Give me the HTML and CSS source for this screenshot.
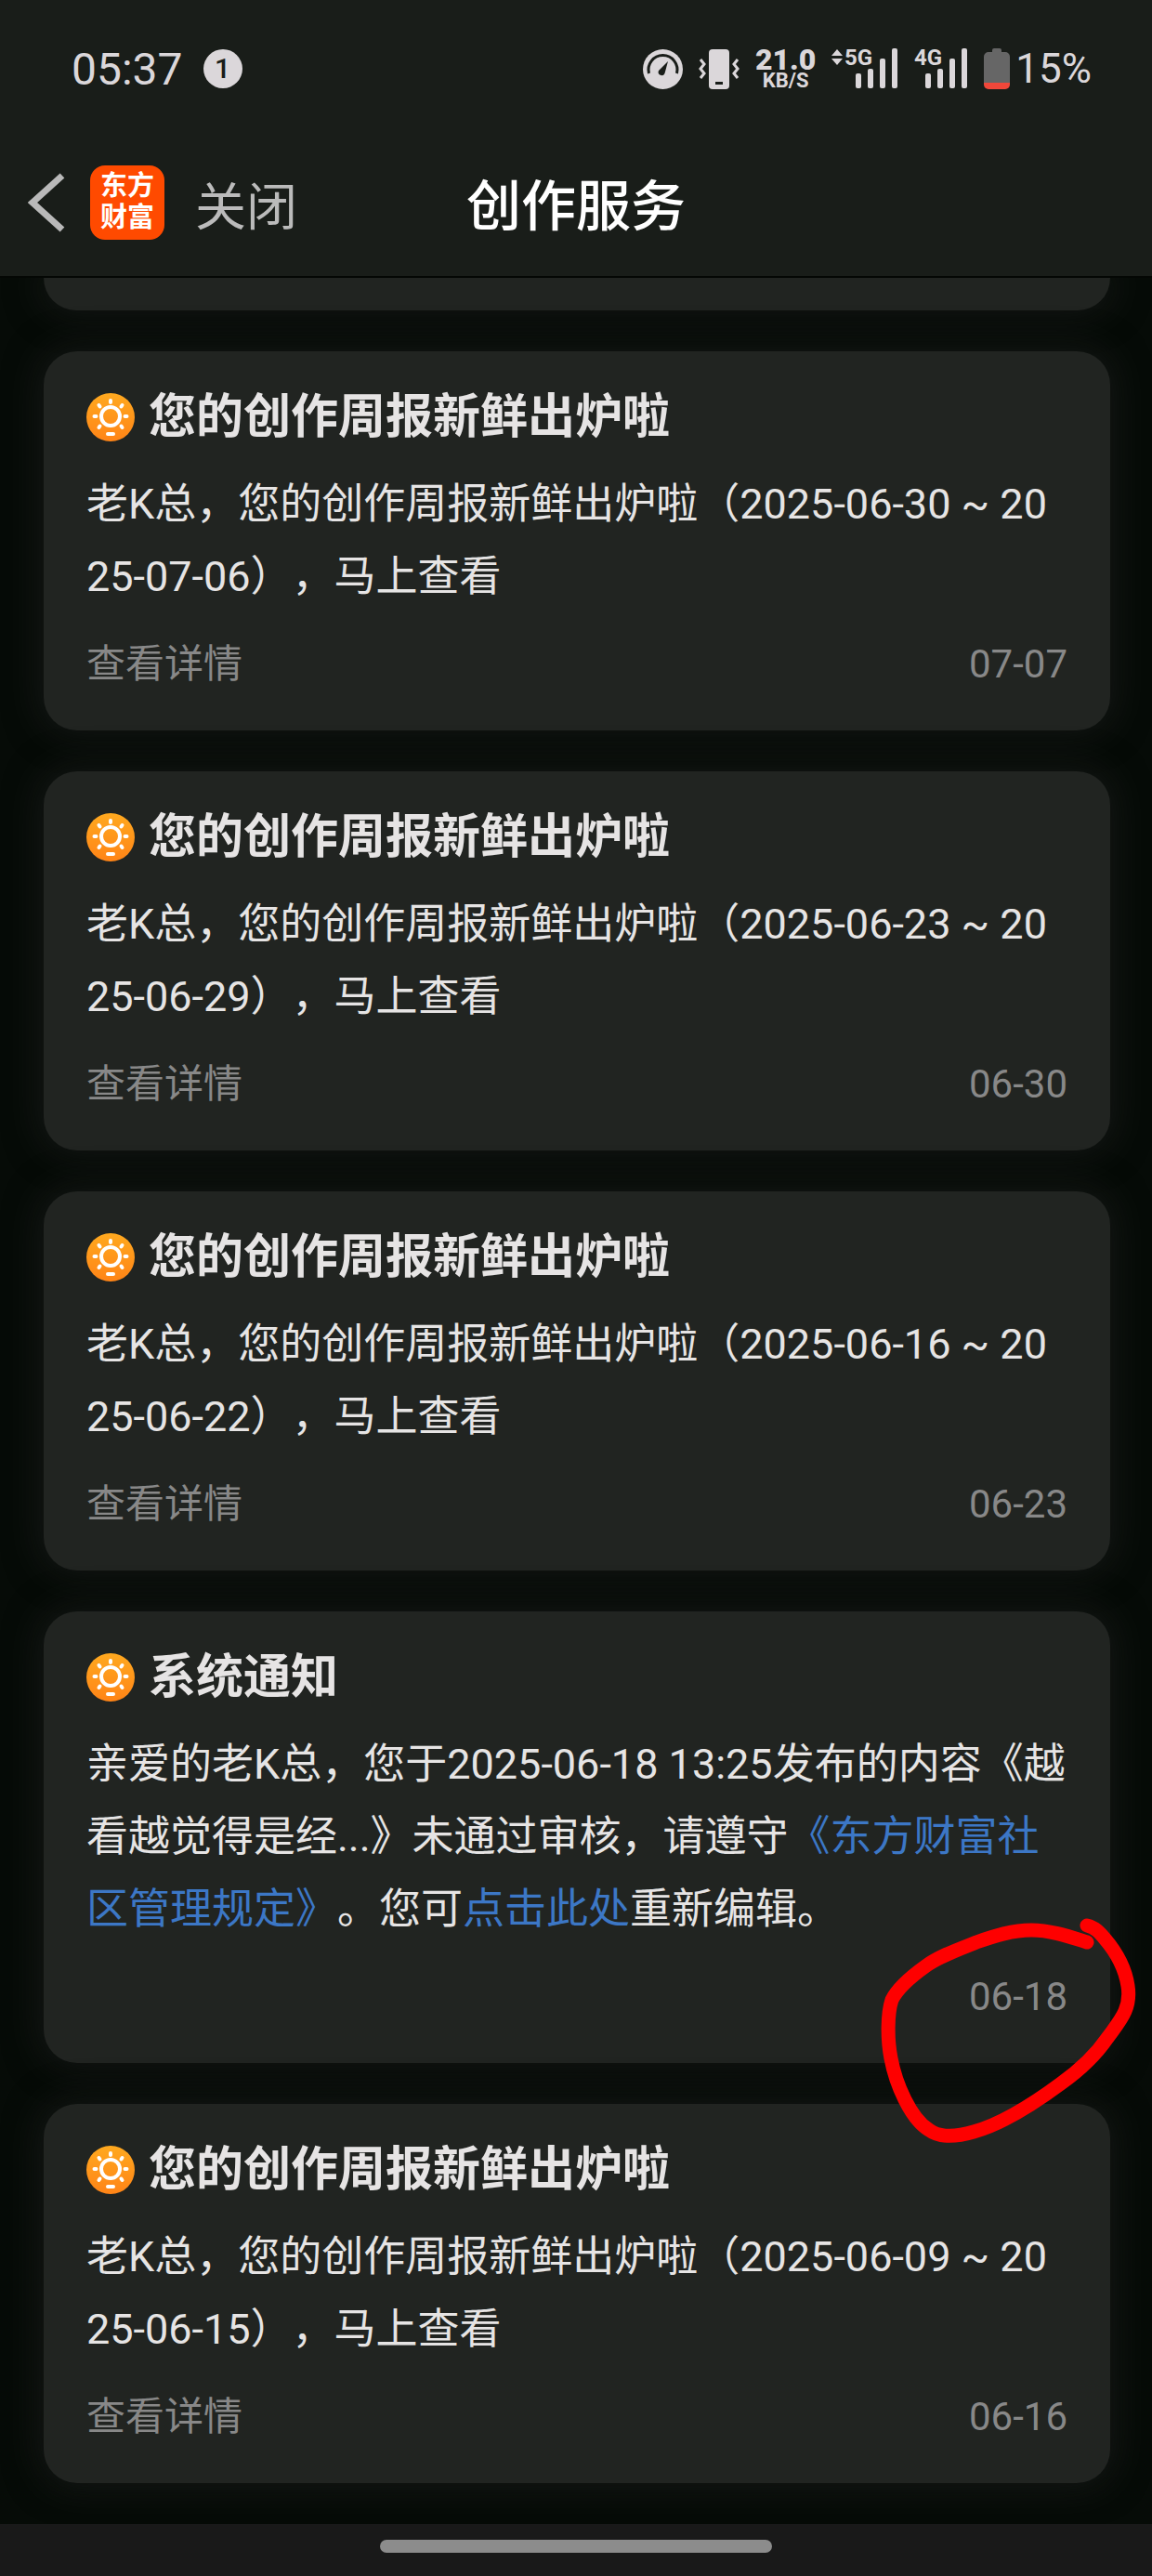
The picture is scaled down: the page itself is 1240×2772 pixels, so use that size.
FILE: index.html
```html
<!DOCTYPE html>
<html lang="zh-CN">
<head>
  <meta charset="UTF-8">
  <meta name="viewport" content="width=device-width, initial-scale=1.0">
  <title>创作服务</title>
  <link rel="stylesheet" href="styles.css">
</head>
<body>

  <!-- shared icons -->
  <svg width="0" height="0" class="sprite">
    <defs>
      <linearGradient id="sunFill" x1="0" y1="0" x2="0" y2="1">
        <stop offset="0" stop-color="#ffa91f"/>
        <stop offset="1" stop-color="#ff8417"/>
      </linearGradient>
      <symbol id="sun" viewBox="0 0 52 52">
        <circle cx="26" cy="26" r="26" fill="url(#sunFill)"/>
        <circle cx="26" cy="25" r="10" fill="none" stroke="#fff" stroke-width="4"/>
        <g stroke="#fff" stroke-width="4" stroke-linecap="round">
          <path d="M26 8v2M13.500 13l1 1.500M38.500 13l-1 1.500M8.500 25h2M41.500 25h2M14.500 35.500l-1 1.500M37.500 35.500l1 1.500"/>
          <path d="M23 44h6"/>
        </g>
      </symbol>
    </defs>
  </svg>

  <header class="header">
    <div class="status">
      <span class="time">05:37</span>
      <span class="badge">1</span>
      <div class="status-icons">
        <svg width="43" height="43" viewBox="0 0 43 43">
          <circle cx="21.500" cy="21.500" r="21.500" fill="#dbd7da"/>
          <path d="M6.500 26a15.500 15.500 0 1 1 30 0" fill="none" stroke="#191d19" stroke-width="3"/>
          <path d="M27 13l-3.500 13a3.500 3.500 0 0 1-6.500-3z" fill="#191d19"/>
        </svg>
        <svg width="44" height="43" viewBox="0 0 44 43">
          <rect x="11" y="0" width="22" height="43" rx="4" fill="#dbd7da"/>
          <rect x="18" y="35" width="8" height="3" fill="#191d19"/>
          <path d="M2 11l4 5-4 5 4 5-4 5M42 11l-4 5 4 5-4 5 4 5" fill="none" stroke="#dbd7da" stroke-width="3"/>
        </svg>
        <div class="speed"><b>21.0</b><span>KB/S</span></div>
        <svg width="72" height="60" viewBox="0 -8 72 60" fill="#dbd7da">
          <path d="M0 8l6-7 6 7zM0 11h12l-6 7z"/>
          <text x="14" y="18" class="net">5G</text>
          <rect x="26" y="27" width="6" height="16" rx="2"/>
          <rect x="39" y="22" width="6" height="21" rx="2"/>
          <rect x="52" y="11" width="6" height="32" rx="2"/>
          <rect x="65" y="0" width="6" height="43" rx="2"/>
        </svg>
        <svg width="58" height="60" viewBox="0 -8 58 60" fill="#dbd7da">
          <text x="0" y="18" class="net">4G</text>
          <rect x="12" y="27" width="6" height="16" rx="2"/>
          <rect x="25" y="22" width="6" height="21" rx="2"/>
          <rect x="38" y="11" width="6" height="32" rx="2"/>
          <rect x="51" y="0" width="6" height="43" rx="2"/>
        </svg>
        <div class="battery">
          <svg width="28" height="44" viewBox="0 0 28 44">
            <path d="M9 4V2a2 2 0 0 1 2-2h6a2 2 0 0 1 2 2v2h4a5 5 0 0 1 5 5v28H0V9a5 5 0 0 1 5-5z" fill="#666"/>
            <path d="M0 37h28v2a5 5 0 0 1-5 5H5a5 5 0 0 1-5-5z" fill="#f0473a"/>
          </svg>
          <span>15%</span>
        </div>
      </div>
    </div>

    <nav class="nav">
      <button class="back" aria-label="返回">
        <svg width="40" height="64" viewBox="0 0 40 64">
          <path d="M37 3L5 32l32 29" fill="none" stroke="#b9b9b9" stroke-width="7"/>
        </svg>
      </button>
      <span class="logo">东方<br>财富</span>
      <button class="close">关闭</button>
      <h1>创作服务</h1>
    </nav>
  </header>

  <main class="list">
    <div class="card card-cut"></div>

    <article class="card">
      <h2><svg class="icon"><use href="#sun"/></svg>您的创作周报新鲜出炉啦</h2>
      <p>老K总，您的创作周报新鲜出炉啦（2025-06-30 ~ 2025-07-06），马上查看</p>
      <div class="foot"><a href="#">查看详情</a><time>07-07</time></div>
    </article>

    <article class="card">
      <h2><svg class="icon"><use href="#sun"/></svg>您的创作周报新鲜出炉啦</h2>
      <p>老K总，您的创作周报新鲜出炉啦（2025-06-23 ~ 2025-06-29），马上查看</p>
      <div class="foot"><a href="#">查看详情</a><time>06-30</time></div>
    </article>

    <article class="card">
      <h2><svg class="icon"><use href="#sun"/></svg>您的创作周报新鲜出炉啦</h2>
      <p>老K总，您的创作周报新鲜出炉啦（2025-06-16 ~ 2025-06-22），马上查看</p>
      <div class="foot"><a href="#">查看详情</a><time>06-23</time></div>
    </article>

    <article class="card">
      <h2><svg class="icon"><use href="#sun"/></svg>系统通知</h2>
      <p>亲爱的老K总，您于2025-06-18 13:25发布的内容《越看越觉得是经...》未通过审核，请遵守<a href="#">《东方财富社区管理规定》</a>。您可<a href="#">点击此处</a>重新编辑。</p>
      <div class="foot"><time>06-18</time></div>
      <!-- hand-drawn circle round the date -->
      <svg class="mark" width="280" height="250" viewBox="0 0 280 250">
        <path d="M225 30C206 24 186 17 165 17C145 17 126 23 106 30C86 38 66 45 51 56C37 66 22 78 15 92C10 107 10 135 14 155C19 182 35 220 55 232C67 241 86 239 103 234C132 226 166 205 197 182C218 167 234 152 247 133C260 115 273 102 269 77C266 57 256 40 244 26C239 20 234 14 225 12"/>
      </svg>
    </article>

    <article class="card">
      <h2><svg class="icon"><use href="#sun"/></svg>您的创作周报新鲜出炉啦</h2>
      <p>老K总，您的创作周报新鲜出炉啦（2025-06-09 ~ 2025-06-15），马上查看</p>
      <div class="foot"><a href="#">查看详情</a><time>06-16</time></div>
    </article>
  </main>

  <footer class="homebar"><span></span></footer>

</body>
</html>
```
FILE: styles.css
```css
* {
  box-sizing: border-box;
  margin: 0;
  padding: 0;
}
body {
  display: flex;
  flex-direction: column;
  min-height: 100vh;
  font-family: Roboto, "Noto Sans CJK SC", sans-serif;
  background: #060b07;
  color: #e6e4e4;
  text-spacing-trim: space-all;
}
button {
  background: none;
  border: none;
  font-family: inherit;
  cursor: pointer;
}
a {
  color: #3c77c6;
  text-decoration: none;
}
svg {
  display: block;
}
.sprite {
  position: absolute;
}

/* header */
.header {
  position: relative;
  z-index: 1;
  background: #191d19;
  border-bottom: 2px solid #040704;
}
.status {
  display: flex;
  align-items: center;
  height: 148px;
  padding: 0 65px 0 77px;
  color: #dbd7da;
}
.time {
  font-size: 48px;
}
.badge {
  width: 42px;
  height: 42px;
  margin-left: 22px;
  border-radius: 50%;
  background: #dbd7da;
  color: #191d19;
  font-size: 30px;
  font-weight: 500;
  line-height: 42px;
  text-align: center;
}
.status-icons {
  display: flex;
  align-items: center;
  gap: 17px;
  margin-left: auto;
}
.speed {
  display: flex;
  flex-direction: column;
  align-items: center;
  font-weight: bold;
}
.speed b {
  font-size: 32px;
  line-height: 26px;
}
.speed span {
  font-size: 22px;
  line-height: 20px;
}
.net {
  font-size: 24px;
  font-weight: bold;
}
.battery {
  display: flex;
  align-items: center;
  gap: 6px;
  font-size: 44px;
}

.nav {
  position: relative;
  display: flex;
  align-items: center;
  height: 149px;
  padding: 0 30px 10px;
}
.logo {
  width: 80px;
  height: 80px;
  margin-left: 27px;
  padding-top: 5px;
  border-radius: 16px;
  background: #ff4a00;
  color: #fff;
  font-size: 29px;
  font-weight: bold;
  line-height: 34px;
  text-align: center;
}
.close {
  margin-left: 33px;
  color: #bbb;
  font-size: 55px;
}
.nav h1 {
  position: absolute;
  left: 50%;
  transform: translateX(-50%);
  color: #fff;
  font-size: 59px;
  font-weight: 500;
}

/* notice cards */
.list {
  flex: 1;
  display: flex;
  flex-direction: column;
  gap: 44px;
  padding: 0 45px 44px 47px;
}
.card {
  position: relative;
  padding: 36px 46px 41px;
  border-radius: 36px;
  background: #212421;
  box-shadow: 0 0 36px 6px rgba(34, 34, 34, 0.5);
}
.card-cut {
  height: 35px;
  padding: 0;
  border-radius: 0 0 36px 36px;
}
.card h2 {
  display: flex;
  align-items: center;
  gap: 15px;
  font-size: 51px;
  line-height: 70px;
}
.icon {
  width: 52px;
  height: 52px;
}
.card p {
  margin-top: 20px;
  font-size: 45px;
  line-height: 78px;
  word-break: break-all;
}
.foot {
  display: flex;
  margin-top: 25px;
  font-size: 42px;
  line-height: 60px;
  color: #888;
}
.foot a {
  color: inherit;
}
.foot time {
  margin-left: auto;
}
.mark {
  position: absolute;
  right: -30px;
  bottom: -90px;
  z-index: 1;
  fill: none;
  stroke: #fe0000;
  stroke-width: 15;
  stroke-linecap: round;
  pointer-events: none;
}

/* gesture bar */
.homebar {
  position: relative;
  display: flex;
  justify-content: center;
  padding-top: 17px;
  height: 56px;
  background: #191919;
}
.homebar span {
  width: 34%;
  height: 14px;
  border-radius: 7px;
  background: #8c8c8c;
}
```
